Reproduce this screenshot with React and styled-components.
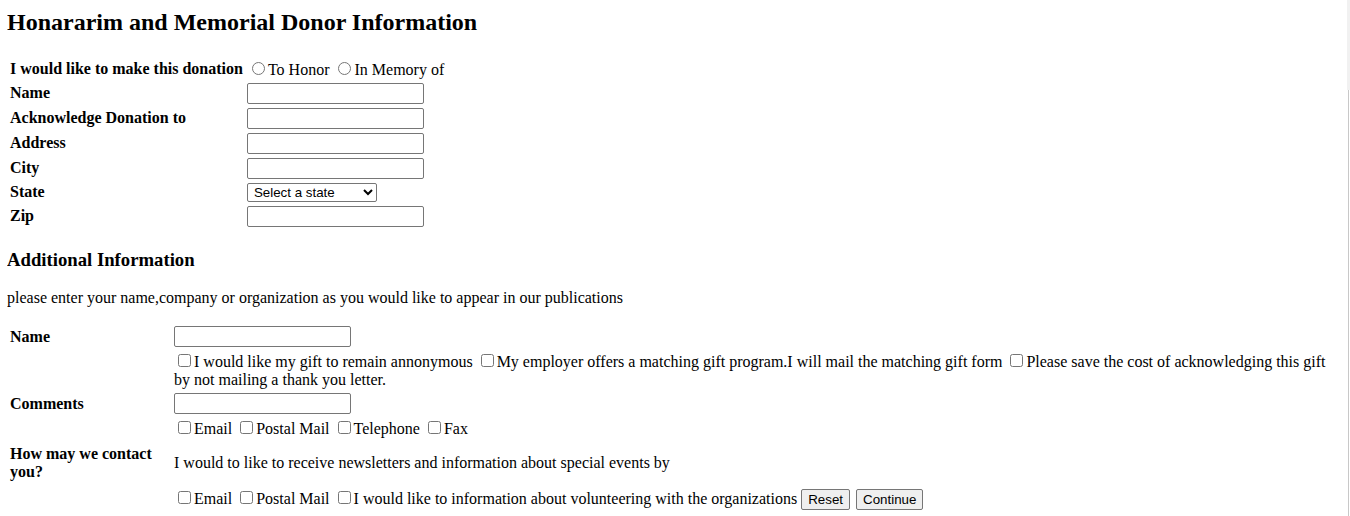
import React from 'react'
import styled, { createGlobalStyle } from 'styled-components'

const GlobalStyle = createGlobalStyle`
  body {
    margin: 9px 8px 8px 7px;
    background: #fff;
    color: #000;
    font-family: "Liberation Serif", "Times New Roman", serif;
    font-size: 16px;
  }
`

const Page = styled.form`
  display: block;
`

const Title = styled.h2`
  font-size: 24px;
  font-weight: bold;
  margin: 0 0 0.83em 0;
`

const SubTitle = styled.h3`
  font-size: 18.72px;
  font-weight: bold;
  margin: 18.72px 0;
`

const Note = styled.p`
  margin: 16px 0;
`

const FormGrid = styled.div`
  display: grid;
  grid-template-columns: ${(props) => (props.wide ? '162px 1fr' : 'max-content max-content')};
  width: ${(props) => (props.wide ? 'auto' : 'max-content')};
  gap: 2px;
  padding: 2px;
  align-items: center;
`

const Cell = styled.div`
  padding: ${(props) => (props.tall ? '4px 1px' : '1px')};
`

const Label = styled(Cell)`
  font-weight: bold;
`

const TextInput = styled.input.attrs({ type: 'text' })`
  box-sizing: border-box;
  width: 177px;
  height: 21px;
  margin: 0;
  padding: 1px 2px;
  border: 1px solid #767676;
  border-radius: 2px;
  font-family: "Liberation Sans", Arial, sans-serif;
  font-size: 13.333px;
  vertical-align: middle;
`

const StateSelect = styled.select`
  box-sizing: border-box;
  width: 130px;
  height: 19px;
  margin: 0;
  padding: 0 0 0 2px;
  border: 1px solid #767676;
  border-radius: 2px;
  background: #fff;
  color: #000;
  font-family: "Liberation Sans", Arial, sans-serif;
  font-size: 13.333px;
`

const Radio = styled.input.attrs({ type: 'radio' })`
  width: 13px;
  height: 13px;
  margin: 3px 3px 0 5px;
`

const Check = styled.input.attrs({ type: 'checkbox' })`
  width: 13px;
  height: 13px;
  margin: 3px 3px 3px 4px;
`

const Button = styled.button`
  margin: 0 2px 0 0;
  padding: 1px 6px;
  height: 21px;
  border: 1px solid #767676;
  border-radius: 2px;
  background: #efefef;
  color: #000;
  font-family: "Liberation Sans", Arial, sans-serif;
  font-size: 13.333px;
`

const ScrollEdge = styled.div`
  position: fixed;
  top: 0;
  right: 0;
  width: 3px;
  height: 100%;
  background: linear-gradient(to bottom, #f1f1f1 0, #f1f1f1 90px, transparent 90px);
  &::after {
    content: '';
    position: absolute;
    top: 90px;
    left: 1px;
    bottom: 0;
    width: 1px;
    background: #c8c8c8;
  }
`

const states = ['Alabama', 'Alaska', 'Arizona', 'Arkansas', 'California', 'Colorado']

export default function App() {
  return (
    <>
      <GlobalStyle />
      <Page onSubmit={(e) => e.preventDefault()}>
        <Title>Honararim and Memorial Donor Information</Title>
        <FormGrid>
          <Label>I would like to make this donation</Label>
          <Cell>
            <Radio name="kind" />To Honor <Radio name="kind" />In Memory of
          </Cell>
          <Label>Name</Label>
          <Cell><TextInput /></Cell>
          <Label>Acknowledge Donation to</Label>
          <Cell><TextInput /></Cell>
          <Label>Address</Label>
          <Cell><TextInput /></Cell>
          <Label>City</Label>
          <Cell><TextInput /></Cell>
          <Label>State</Label>
          <Cell>
            <StateSelect defaultValue="">
              <option value="">Select a state</option>
              {states.map((s) => (
                <option key={s} value={s}>{s}</option>
              ))}
            </StateSelect>
          </Cell>
          <Label>Zip</Label>
          <Cell><TextInput /></Cell>
        </FormGrid>

        <SubTitle>Additional Information</SubTitle>
        <Note>please enter your name,company or organization as you would like to appear in our publications</Note>

        <FormGrid wide>
          <Label>Name</Label>
          <Cell><TextInput /></Cell>
          <Cell />
          <Cell>
            <Check />I would like my gift to remain annonymous <Check />My employer offers a matching gift program.I will mail the matching gift form <Check />Please save the cost of acknowledging this gift by not mailing a thank you letter.
          </Cell>
          <Label>Comments</Label>
          <Cell><TextInput /></Cell>
          <Cell />
          <Cell>
            <Check />Email <Check />Postal Mail <Check />Telephone <Check />Fax
          </Cell>
          <Label tall>How may we contact you?</Label>
          <Cell tall>I would to like to receive newsletters and information about special events by</Cell>
          <Cell />
          <Cell>
            <Check />Email <Check />Postal Mail <Check />I would like to information about volunteering with the organizations <Button type="reset">Reset</Button> <Button type="submit">Continue</Button>
          </Cell>
        </FormGrid>
      </Page>
      <ScrollEdge />
    </>
  )
}
